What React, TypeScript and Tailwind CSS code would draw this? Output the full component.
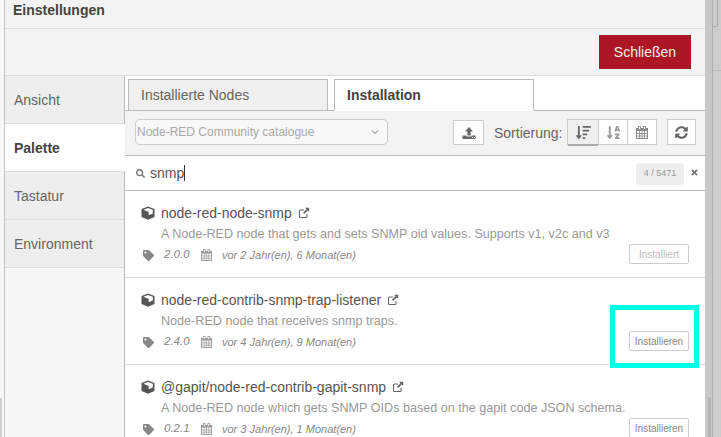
import { FaTag, FaSearch, FaTimes, FaSyncAlt, FaSortAlphaDown, FaSortAmountDown } from "react-icons/fa";

function ExternalLink({ className }: { className?: string }) {
  return (
    <svg viewBox="0 0 12 12" width="12" height="12" className={className}>
      <path d="M9 7v2.5A1 1 0 0 1 8 10.5H2.5a1 1 0 0 1-1-1V4a1 1 0 0 1 1-1H6" fill="none" stroke="currentColor" strokeWidth="1.1" />
      <path d="M7 0.8h4.2V5L9.7 3.6 6.3 7 5 5.7 8.4 2.3z" fill="currentColor" />
    </svg>
  );
}

function UploadIcon() {
  return (
    <svg viewBox="0 0 14 14" width="14" height="14" className="text-[#666]">
      <path d="M7 1 11 5.5H8.6V9.5H5.4V5.5H3z" fill="currentColor" />
      <path d="M0.5 9.5H4.5V10.5H9.5V9.5H13.5V13H0.5z" fill="currentColor" />
      <rect x="10" y="11" width="1" height="1" fill="#fff" />
      <rect x="12" y="11" width="1" height="1" fill="#fff" />
    </svg>
  );
}

function Cube() {
  return (
    <svg viewBox="0 0 14 14" width="14" height="14" className="mr-[6px] shrink-0 text-[#555]">
      <path d="M7 0.5 13.5 3V11L7 13.8 0.5 11V3z" fill="currentColor" />
      <path d="M7 2 11.8 3.8V7.6L7.7 9.2V6L2.4 3.8z" fill="#fff" />
    </svg>
  );
}

function Calendar({ w = 12, h = 13, color = "#999" }: { w?: number; h?: number; color?: string }) {
  return (
    <svg viewBox="0 0 12 13" width={w} height={h} className="shrink-0">
      <rect x="0.5" y="2.5" width="11" height="10" fill="none" stroke={color} />
      <rect x="0.5" y="2.5" width="11" height="2.5" fill={color} />
      <path d="M3.5 5V12.5M6 5V12.5M8.5 5V12.5M0.5 7.5H11.5M0.5 10H11.5" stroke={color} strokeWidth="0.8" fill="none" />
      <rect x="2.5" y="0.5" width="2" height="3" fill="#fff" stroke={color} strokeWidth="0.8" />
      <rect x="7.5" y="0.5" width="2" height="3" fill="#fff" stroke={color} strokeWidth="0.8" />
    </svg>
  );
}

function Row({ name, desc, version, age, button, disabled, last }: { name: string; desc: string; version: string; age: string; button: string; disabled?: boolean; last?: boolean }) {
  return (
    <div className={`h-[87px] shrink-0 relative pl-4 pr-4 pt-[13px] ${last ? "" : "border-b border-[#ddd]"}`}>
      <div className="flex items-center h-[18px] text-[14px] text-[#555]">
        <Cube />
        <span>{name}</span>
        <ExternalLink className="ml-[6px] text-[#666]" />
      </div>
      <div className="mt-[3px] ml-[20px] h-[18px] leading-[18px] text-[12.6px] text-[#999] whitespace-nowrap">{desc}</div>
      <div className="mt-[3px] flex items-center h-[18px] text-[11px] italic text-[#888]">
        <FaTag className="w-[11px] h-[11px] ml-[2px] text-[#888]" />
        <span className="ml-[10px] w-[25px] text-[11.5px]">{version}</span>
        <span className="ml-[12px]"><Calendar w={11} h={12} /></span>
        <span className="ml-[10px]">{age}</span>
      </div>
      <div className={`absolute right-[16px] ${last ? "bottom-[14px]" : "bottom-[13px]"} w-[60px] h-[20px] border rounded-[2px] flex items-center justify-center text-[10px] ${disabled ? "border-[#ccc] text-[#bbb]" : "border-[#ccc] text-[#888]"}`}>
        {button}
      </div>
    </div>
  );
}

export default function App() {
  return (
    <div className="relative flex w-[721px] h-[437px] overflow-hidden bg-[#cacaca] text-[14px] [font-family:'Liberation_Sans',Arial,sans-serif]">
      <div className="w-[4px] shrink-0 bg-[#f7f7f7] flex flex-col">
        <div className="h-[398px]" />
        <div className="flex-1 w-[2px] bg-[#cfcfcf]" />
      </div>
      <div className="w-[701px] shrink-0 flex flex-col bg-white border-l border-[#c4c4c4] h-full">
        <div className="h-[29px] shrink-0 bg-[#f3f3f3] border-b border-[#ddd] pl-2 leading-[20px] font-bold text-[#444]">Einstellungen</div>
        <div className="h-[47px] shrink-0 bg-[#f3f3f3] border-b border-[#ddd] flex justify-end items-start pt-[6px] pr-[14px]">
          <div className="w-[92px] h-[34px] bg-[#ad1625] text-[#eee] flex items-center justify-center">Schließen</div>
        </div>
        <div className="flex flex-1 min-h-0">
          <div className="w-[120px] shrink-0 bg-[#f3f3f3] border-r border-[#bbb] flex flex-col text-[14px]">
            {["Ansicht", "Palette", "Tastatur", "Environment"].map((t) => (
              <div key={t} className={`h-[48px] shrink-0 flex items-center pl-[9px] pt-[2px] border-b border-[#ddd] ${t === "Palette" ? "bg-white font-bold text-[#444] border-r-0 -mr-px" : "bg-[#eeeeee] text-[#666]"}`}>
                {t}
              </div>
            ))}
            <div className="flex-1 bg-[#f7f7f7]" />
          </div>
          <div className="flex-1 min-w-0 flex flex-col bg-white">
            <div className="h-[35px] shrink-0 border-b border-[#bbb] flex items-end pl-[3px]">
              <div className="w-[200px] h-[32px] -mb-px border border-[#bbb] border-b-[#bbb] bg-[#f0f0f0] text-[#666] pl-[12px] flex items-center">Installierte Nodes</div>
              <div className="ml-[6px] w-[200px] h-[32px] -mb-px border border-[#bbb] border-b-white bg-white font-bold text-[#444] pl-[12px] flex items-center">Installation</div>
            </div>
            <div className="h-[45px] shrink-0 bg-[#f3f3f3] border-b border-[#bbb] flex items-center pl-[10px]">
              <div className="w-[253px] h-[26px] mt-[-2px] border border-[#ccc] rounded-[5px] bg-[#f8f8f8] flex items-center pl-[1px] pr-[8px] justify-between text-[12px] text-[#aaa]">
                <span>Node-RED Community catalogue</span>
                <svg viewBox="0 0 8 6" width="8" height="6" className="text-[#777]"><path d="M1 1.5 4 4.5 7 1.5" fill="none" stroke="currentColor" strokeWidth="1" /></svg>
              </div>
              <div className="ml-[65px] w-[31px] h-[25px] border border-[#ccc] bg-white flex items-center justify-center mt-[-1px]"><UploadIcon /></div>
              <span className="ml-[10px] text-[#666] w-[69px] whitespace-nowrap">Sortierung:</span>
              <div className="ml-[4px] flex h-[26px] mt-[-2px] border border-[#ccc] bg-white">
                <div className="w-[30px] h-[26px] bg-[#efefef] border-b-2 border-[#aaa] flex items-center justify-center"><FaSortAmountDown className="w-[15px] h-[15px] text-[#666]" /></div>
                <div className="w-[29px] border-l border-[#ccc] flex items-center justify-center"><FaSortAlphaDown className="w-[15px] h-[15px] text-[#999]" /></div>
                <div className="w-[29px] border-l border-[#ccc] flex items-center justify-center"><Calendar color="#888" /></div>
              </div>
              <div className="ml-[10px] w-[29px] h-[26px] mt-[-2px] border border-[#ccc] bg-white flex items-center justify-center"><FaSyncAlt className="w-[13px] h-[13px] text-[#666]" /></div>
            </div>
            <div className="h-[35px] shrink-0 border-b border-[#bbb] flex items-center relative pl-[11px]">
              <FaSearch className="w-[9px] h-[9px] text-[#777]" />
              <span className="ml-[5px] text-[#555] border-r border-[#333] leading-[16px]">snmp</span>
              <div className="absolute left-[511px] top-[7px] w-[48px] h-[22px] rounded-[3px] bg-[#eeeeee] text-[#999] text-[9px] flex items-center justify-center">4 / 5471</div>
              <FaTimes className="absolute left-[565px] top-[12px] w-[9px] h-[9px] text-[#777]" />
            </div>
            <div className="flex-1 min-h-0 overflow-hidden flex flex-col">
              <Row name="node-red-node-snmp" desc="A Node-RED node that gets and sets SNMP oid values. Supports v1, v2c and v3" version="2.0.0" age="vor 2 Jahr(en), 6 Monat(en)" button="Installiert" disabled />
              <Row name="node-red-contrib-snmp-trap-listener" desc="Node-RED node that receives snmp traps." version="2.4.0" age="vor 4 Jahr(en), 9 Monat(en)" button="Installieren" />
              <Row name="@gapit/node-red-contrib-gapit-snmp" desc="A Node-RED node which gets SNMP OIDs based on the gapit code JSON schema." version="0.2.1" age="vor 3 Jahr(en), 1 Monat(en)" button="Installieren" last />
            </div>
          </div>
        </div>
      </div>
      <div className="flex-1 flex">
        <div className="w-[8px] border-r border-[#b0b0b0] bg-[#c8c8c8] h-full relative">
          <div className="absolute left-[3px] top-[397px] w-[3px] h-[40px] bg-[#b4b4b4]" />
        </div>
        <div className="flex-1 bg-[#cccccc] relative">
          <div className="absolute left-0 top-0 right-[3px] h-[27px] border-r border-b border-[#aaa] rounded-br-[2px]" />
          <div className="absolute left-0 right-0 top-[70px] h-px bg-[#bbb]" />
        </div>
      </div>
      <div className="absolute left-[610px] top-[305px] w-[89px] h-[63px] border-[5px] border-[#00ffe6]" />
    </div>
  );
}
